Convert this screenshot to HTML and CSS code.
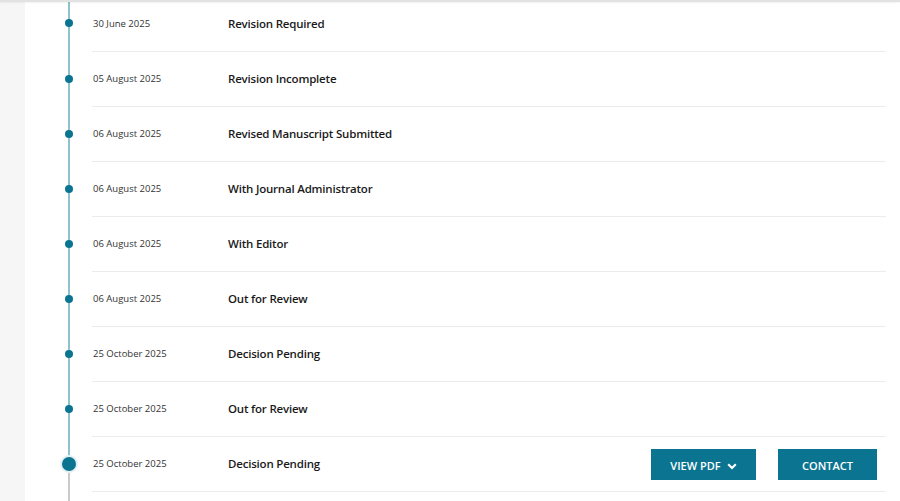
FILE: index.html
```html
<!DOCTYPE html>
<html>
<head>
<meta charset="utf-8">
<link rel="stylesheet" href="styles.css">
</head>
<body>
<div class="topline"></div>
<div class="page">
  <div class="side"></div>
  <div class="main">
    <ul class="timeline">
      <li class="row first">
        <div class="marker"><span class="dot"></span></div>
        <div class="content"><span class="date">30 June 2025</span><span class="status">Revision Required</span></div>
      </li>
      <li class="row">
        <div class="marker"><span class="dot"></span></div>
        <div class="content"><span class="date">05 August 2025</span><span class="status">Revision Incomplete</span></div>
      </li>
      <li class="row">
        <div class="marker"><span class="dot"></span></div>
        <div class="content"><span class="date">06 August 2025</span><span class="status">Revised Manuscript Submitted</span></div>
      </li>
      <li class="row">
        <div class="marker"><span class="dot"></span></div>
        <div class="content"><span class="date">06 August 2025</span><span class="status">With Journal Administrator</span></div>
      </li>
      <li class="row">
        <div class="marker"><span class="dot"></span></div>
        <div class="content"><span class="date">06 August 2025</span><span class="status">With Editor</span></div>
      </li>
      <li class="row">
        <div class="marker"><span class="dot"></span></div>
        <div class="content"><span class="date">06 August 2025</span><span class="status">Out for Review</span></div>
      </li>
      <li class="row">
        <div class="marker"><span class="dot"></span></div>
        <div class="content"><span class="date">25 October 2025</span><span class="status">Decision Pending</span></div>
      </li>
      <li class="row">
        <div class="marker"><span class="dot"></span></div>
        <div class="content"><span class="date">25 October 2025</span><span class="status">Out for Review</span></div>
      </li>
      <li class="row current">
        <div class="marker"><span class="dot"></span></div>
        <div class="content">
          <span class="date">25 October 2025</span><span class="status">Decision Pending</span>
          <div class="actions">
            <button class="btn btn-pdf">VIEW PDF
              <svg class="chev" width="10" height="7" viewBox="0 0 10 7"><path d="M1.2 1.3 L5 5 L8.8 1.3" fill="none" stroke="#fff" stroke-width="2.2"/></svg>
            </button>
            <button class="btn btn-contact">CONTACT</button>
          </div>
        </div>
      </li>
    </ul>
  </div>
</div>
</body>
</html>
```

FILE: styles.css
```css
* { box-sizing: border-box; }
html, body { margin: 0; padding: 0; background: #fff; overflow: hidden; }
body { font-family: "Open Sans", "Liberation Sans", sans-serif; color: #1a1a1a; }
.topline { height: 2px; background: #e2e2e2; box-shadow: 0 1px 2px rgba(0,0,0,0.06); position: relative; z-index: 1; }
.page { display: flex; height: 499px; }
.side { width: 25px; flex: none; background: #f6f6f6; }
.main { flex: 1; min-width: 0; }
.timeline { list-style: none; margin: 0; padding: 0 14px 0 0; }
.row { display: flex; height: 55px; }
.row.first { height: 50px; }
.marker { width: 67px; flex: none; position: relative; }
.marker::before { content: ""; position: absolute; left: 43px; top: 0; bottom: 0; width: 2px; background: #8ec2cf; }
.current .marker::before { bottom: -20px; background: linear-gradient(#8ec2cf 0, #8ec2cf 20px, #c9c9c9 20px); }
.dot { position: absolute; left: 40px; top: 50%; width: 8px; height: 8px; margin-top: -5px; border-radius: 50%; background: #0b7491; }
.first .dot { margin-top: -8px; }
.current .dot { left: 37px; width: 14px; height: 14px; margin-top: -8px; box-shadow: 0 0 0 2px #e3f1f5; }
.content { flex: 1; display: flex; align-items: center; border-bottom: 1px solid #ececec; padding-right: 9px; padding-bottom: 2px; }
.first .content { padding-bottom: 7px; }
.date { width: 136px; flex: none; padding-left: 1px; font-size: 9.5px; color: #333; }
.status { font-size: 11.5px; letter-spacing: -0.2px; font-weight: 600; color: #1a1a1a; }
.actions { margin-left: auto; display: flex; gap: 22px; margin-top: 3px; }
.btn { height: 31px; border: none; background: #0b7491; color: #fff; font-family: inherit; font-size: 11px; font-weight: 600; display: flex; align-items: center; justify-content: center; gap: 6px; padding: 1px 0 0; }
.btn-pdf { width: 105px; }
.btn-contact { width: 99px; }
.chev { margin-top: 2px; }
```
